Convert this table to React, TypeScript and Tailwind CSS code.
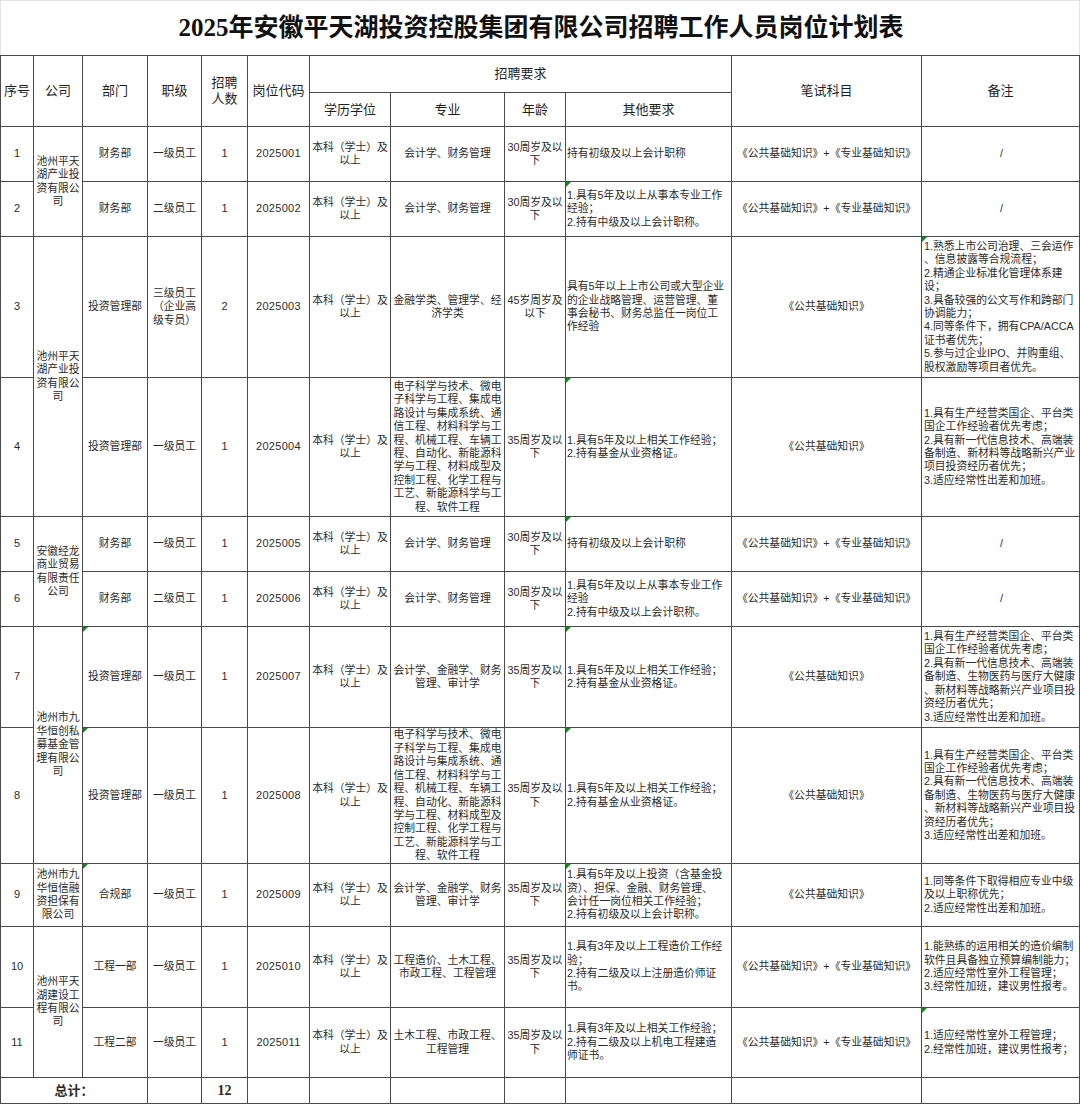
import type { ReactNode } from 'react'

type Job = {
  no: string
  company?: { lines: string[]; span: 1 | 2 }
  dept: string
  level: string[]
  count: string
  code: string
  major: string[]
  age: string[]
  other: string[]
  exam: string
  note: string[]
  marks?: ('dept' | 'other' | 'note')[]
}

const BOTH = '《公共基础知识》+《专业基础知识》'
const PUBLIC = '《公共基础知识》'
const DEGREE = ['本科（学士）及', '以上']

const ENGINEERING = [
  '电子科学与技术、微电',
  '子科学与工程、集成电',
  '路设计与集成系统、通',
  '信工程、材料科学与工',
  '程、机械工程、车辆工',
  '程、自动化、新能源科',
  '学与工程、材料成型及',
  '控制工程、化学工程与',
  '工艺、新能源科学与工',
  '程、软件工程',
]

const FUND_NOTE = [
  '1.具有生产经营类国企、平台类',
  '国企工作经验者优先考虑；',
  '2.具有新一代信息技术、高端装',
  '备制造、生物医药与医疗大健康',
  '、新材料等战略新兴产业项目投',
  '资经历者优先；',
  '3.适应经常性出差和加班。',
]

const jobs: Job[] = [
  {
    no: '1',
    company: { lines: ['池州平天', '湖产业投', '资有限公', '司'], span: 2 },
    dept: '财务部',
    level: ['一级员工'],
    count: '1',
    code: '2025001',
    major: ['会计学、财务管理'],
    age: ['30周岁及以', '下'],
    other: ['持有初级及以上会计职称'],
    exam: BOTH,
    note: ['/'],
  },
  {
    no: '2',
    dept: '财务部',
    level: ['二级员工'],
    count: '1',
    code: '2025002',
    major: ['会计学、财务管理'],
    age: ['30周岁及以', '下'],
    other: ['1.具有5年及以上从事本专业工作', '经验；', '2.持有中级及以上会计职称。'],
    exam: BOTH,
    note: ['/'],
    marks: ['other'],
  },
  {
    no: '3',
    company: { lines: ['池州平天', '湖产业投', '资有限公', '司'], span: 2 },
    dept: '投资管理部',
    level: ['三级员工', '（企业高', '级专员）'],
    count: '2',
    code: '2025003',
    major: ['金融学类、管理学、经', '济学类'],
    age: ['45岁周岁及', '以下'],
    other: [
      '具有5年以上上市公司或大型企业',
      '的企业战略管理、运营管理、董',
      '事会秘书、财务总监任一岗位工',
      '作经验',
    ],
    exam: PUBLIC,
    note: [
      '1.熟悉上市公司治理、三会运作',
      '、信息披露等合规流程；',
      '2.精通企业标准化管理体系建',
      '设；',
      '3.具备较强的公文写作和跨部门',
      '协调能力；',
      '4.同等条件下，拥有CPA/ACCA',
      '证书者优先；',
      '5.参与过企业IPO、并购重组、',
      '股权激励等项目者优先。',
    ],
    marks: ['note'],
  },
  {
    no: '4',
    dept: '投资管理部',
    level: ['一级员工'],
    count: '1',
    code: '2025004',
    major: ENGINEERING,
    age: ['35周岁及以', '下'],
    other: ['1.具有5年及以上相关工作经验；', '2.持有基金从业资格证。'],
    exam: PUBLIC,
    note: [
      '1.具有生产经营类国企、平台类',
      '国企工作经验者优先考虑；',
      '2.具有新一代信息技术、高端装',
      '备制造、新材料等战略新兴产业',
      '项目投资经历者优先；',
      '3.适应经常性出差和加班。',
    ],
    marks: ['other'],
  },
  {
    no: '5',
    company: { lines: ['安徽经龙', '商业贸易', '有限责任', '公司'], span: 2 },
    dept: '财务部',
    level: ['一级员工'],
    count: '1',
    code: '2025005',
    major: ['会计学、财务管理'],
    age: ['30周岁及以', '下'],
    other: ['持有初级及以上会计职称'],
    exam: BOTH,
    note: ['/'],
    marks: ['other'],
  },
  {
    no: '6',
    dept: '财务部',
    level: ['二级员工'],
    count: '1',
    code: '2025006',
    major: ['会计学、财务管理'],
    age: ['30周岁及以', '下'],
    other: ['1.具有5年及以上从事本专业工作', '经验', '2.持有中级及以上会计职称。'],
    exam: BOTH,
    note: ['/'],
  },
  {
    no: '7',
    company: { lines: ['池州市九', '华恒创私', '募基金管', '理有限公', '司'], span: 2 },
    dept: '投资管理部',
    level: ['一级员工'],
    count: '1',
    code: '2025007',
    major: ['会计学、金融学、财务', '管理、审计学'],
    age: ['35周岁及以', '下'],
    other: ['1.具有5年及以上相关工作经验；', '2.持有基金从业资格证。'],
    exam: PUBLIC,
    note: FUND_NOTE,
    marks: ['dept', 'other'],
  },
  {
    no: '8',
    dept: '投资管理部',
    level: ['一级员工'],
    count: '1',
    code: '2025008',
    major: ENGINEERING,
    age: ['35周岁及以', '下'],
    other: ['1.具有5年及以上相关工作经验；', '2.持有基金从业资格证。'],
    exam: PUBLIC,
    note: FUND_NOTE,
    marks: ['dept', 'other'],
  },
  {
    no: '9',
    company: { lines: ['池州市九', '华恒信融', '资担保有', '限公司'], span: 1 },
    dept: '合规部',
    level: ['一级员工'],
    count: '1',
    code: '2025009',
    major: ['会计学、金融学、财务', '管理、审计学'],
    age: ['35周岁及以', '下'],
    other: [
      '1.具有5年及以上投资（含基金投',
      '资）、担保、金融、财务管理、',
      '会计任一岗位相关工作经验；',
      '2.持有初级及以上会计职称。',
    ],
    exam: PUBLIC,
    note: ['1.同等条件下取得相应专业中级', '及以上职称优先；', '2.适应经常性出差和加班。'],
    marks: ['dept', 'other'],
  },
  {
    no: '10',
    company: { lines: ['池州平天', '湖建设工', '程有限公', '司'], span: 2 },
    dept: '工程一部',
    level: ['一级员工'],
    count: '1',
    code: '2025010',
    major: ['工程造价、土木工程、', '市政工程、工程管理'],
    age: ['35周岁及以', '下'],
    other: ['1.具有3年及以上工程造价工作经', '验；', '2.持有二级及以上注册造价师证', '书。'],
    exam: BOTH,
    note: [
      '1.能熟练的运用相关的造价编制',
      '软件且具备独立预算编制能力；',
      '2.适应经常性室外工程管理；',
      '3.经常性加班，建议男性报考。',
    ],
  },
  {
    no: '11',
    dept: '工程二部',
    level: ['一级员工'],
    count: '1',
    code: '2025011',
    major: ['土木工程、市政工程、', '工程管理'],
    age: ['35周岁及以', '下'],
    other: ['1.具有3年及以上相关工作经验；', '2.持有二级及以上机电工程建造', '师证书。'],
    exam: BOTH,
    note: ['1.适应经常性室外工程管理；', '2.经常性加班，建议男性报考；'],
    marks: ['note'],
  },
]

function Lines({ lines }: { lines: string[] }) {
  return (
    <>
      {lines.map((l, i) => (
        <span key={i} className="block whitespace-nowrap">
          {l}
        </span>
      ))}
    </>
  )
}

function Cell({
  children,
  className = '',
  left = false,
  mark = false,
}: {
  children?: ReactNode
  className?: string
  left?: boolean
  mark?: boolean
}) {
  return (
    <div
      className={`relative flex flex-col justify-center overflow-hidden bg-white ${
        left ? 'items-start pl-[1px] text-left' : 'items-center text-center'
      } ${className}`}
    >
      {mark && (
        <span className="absolute left-0 top-0 h-0 w-0 border-t-[5px] border-r-[5px] border-t-[#0f8a1e] border-r-transparent" />
      )}
      {children}
    </div>
  )
}

function Head({ children, className = '' }: { children: ReactNode; className?: string }) {
  return (
    <Cell className={`text-[13px] leading-[16px] text-[#1f1f1f] ${className}`}>{children}</Cell>
  )
}

export default function App() {
  return (
    <div className="w-[1080px] bg-white font-['Liberation_Sans','Noto_Sans_CJK_SC',sans-serif] text-[#2b2b2b]">
      <div className="flex h-[55px] items-center justify-center border-x border-t border-[#e3e3e3]">
        <h1 className="pl-[2px] font-['Liberation_Serif','Noto_Sans_CJK_SC',serif] text-[25px] font-bold text-[#111]">
          2025年安徽平天湖投资控股集团有限公司招聘工作人员岗位计划表
        </h1>
      </div>

      <div className="grid grid-cols-[32px_48px_64px_53px_45px_61px_80px_113px_60px_165px_189px_157px] grid-rows-[36px_33px_54px_54px_140px_138px_54px_54px_100px_135px_62px_80px_69px_25px] gap-px bg-[#4a4a4a] p-px text-[10.8px] leading-[13.4px]">
        <Head className="row-span-2">序号</Head>
        <Head className="row-span-2">公司</Head>
        <Head className="row-span-2">部门</Head>
        <Head className="row-span-2">职级</Head>
        <Head className="row-span-2">
          <Lines lines={['招聘', '人数']} />
        </Head>
        <Head className="row-span-2">岗位代码</Head>
        <Head className="col-span-4">招聘要求</Head>
        <Head className="row-span-2">笔试科目</Head>
        <Head className="row-span-2">备注</Head>
        <Head>学历学位</Head>
        <Head>专业</Head>
        <Head>年龄</Head>
        <Head>其他要求</Head>

        {jobs.map(job => {
          const marks = job.marks ?? []
          return [
            <Cell key={`${job.no}-no`} className="text-[11px]">
              {job.no}
            </Cell>,
            job.company && (
              <Cell
                key={`${job.no}-co`}
                className={job.company.span === 2 ? 'row-span-2' : ''}
              >
                <Lines lines={job.company.lines} />
              </Cell>
            ),
            <Cell key={`${job.no}-dept`} mark={marks.includes('dept')}>
              {job.dept}
            </Cell>,
            <Cell key={`${job.no}-lvl`}>
              <Lines lines={job.level} />
            </Cell>,
            <Cell key={`${job.no}-cnt`} className="text-[11px]">
              {job.count}
            </Cell>,
            <Cell key={`${job.no}-code`} className="text-[11px] tracking-[0.3px]">
              {job.code}
            </Cell>,
            <Cell key={`${job.no}-deg`}>
              <Lines lines={DEGREE} />
            </Cell>,
            <Cell key={`${job.no}-major`}>
              <Lines lines={job.major} />
            </Cell>,
            <Cell key={`${job.no}-age`}>
              <Lines lines={job.age} />
            </Cell>,
            <Cell key={`${job.no}-other`} left mark={marks.includes('other')}>
              <Lines lines={job.other} />
            </Cell>,
            <Cell key={`${job.no}-exam`}>{job.exam}</Cell>,
            <Cell
              key={`${job.no}-note`}
              left={job.note[0] !== '/'}
              mark={marks.includes('note')}
              className="pl-[2px]"
            >
              <Lines lines={job.note} />
            </Cell>,
          ]
        })}

        <Cell className="col-span-3 text-[13px] font-bold">总计：</Cell>
        <Cell />
        <Cell className="font-['Liberation_Serif',serif] text-[14px] font-bold">12</Cell>
        <Cell />
        <Cell />
        <Cell />
        <Cell />
        <Cell />
        <Cell />
        <Cell />
      </div>
    </div>
  )
}
